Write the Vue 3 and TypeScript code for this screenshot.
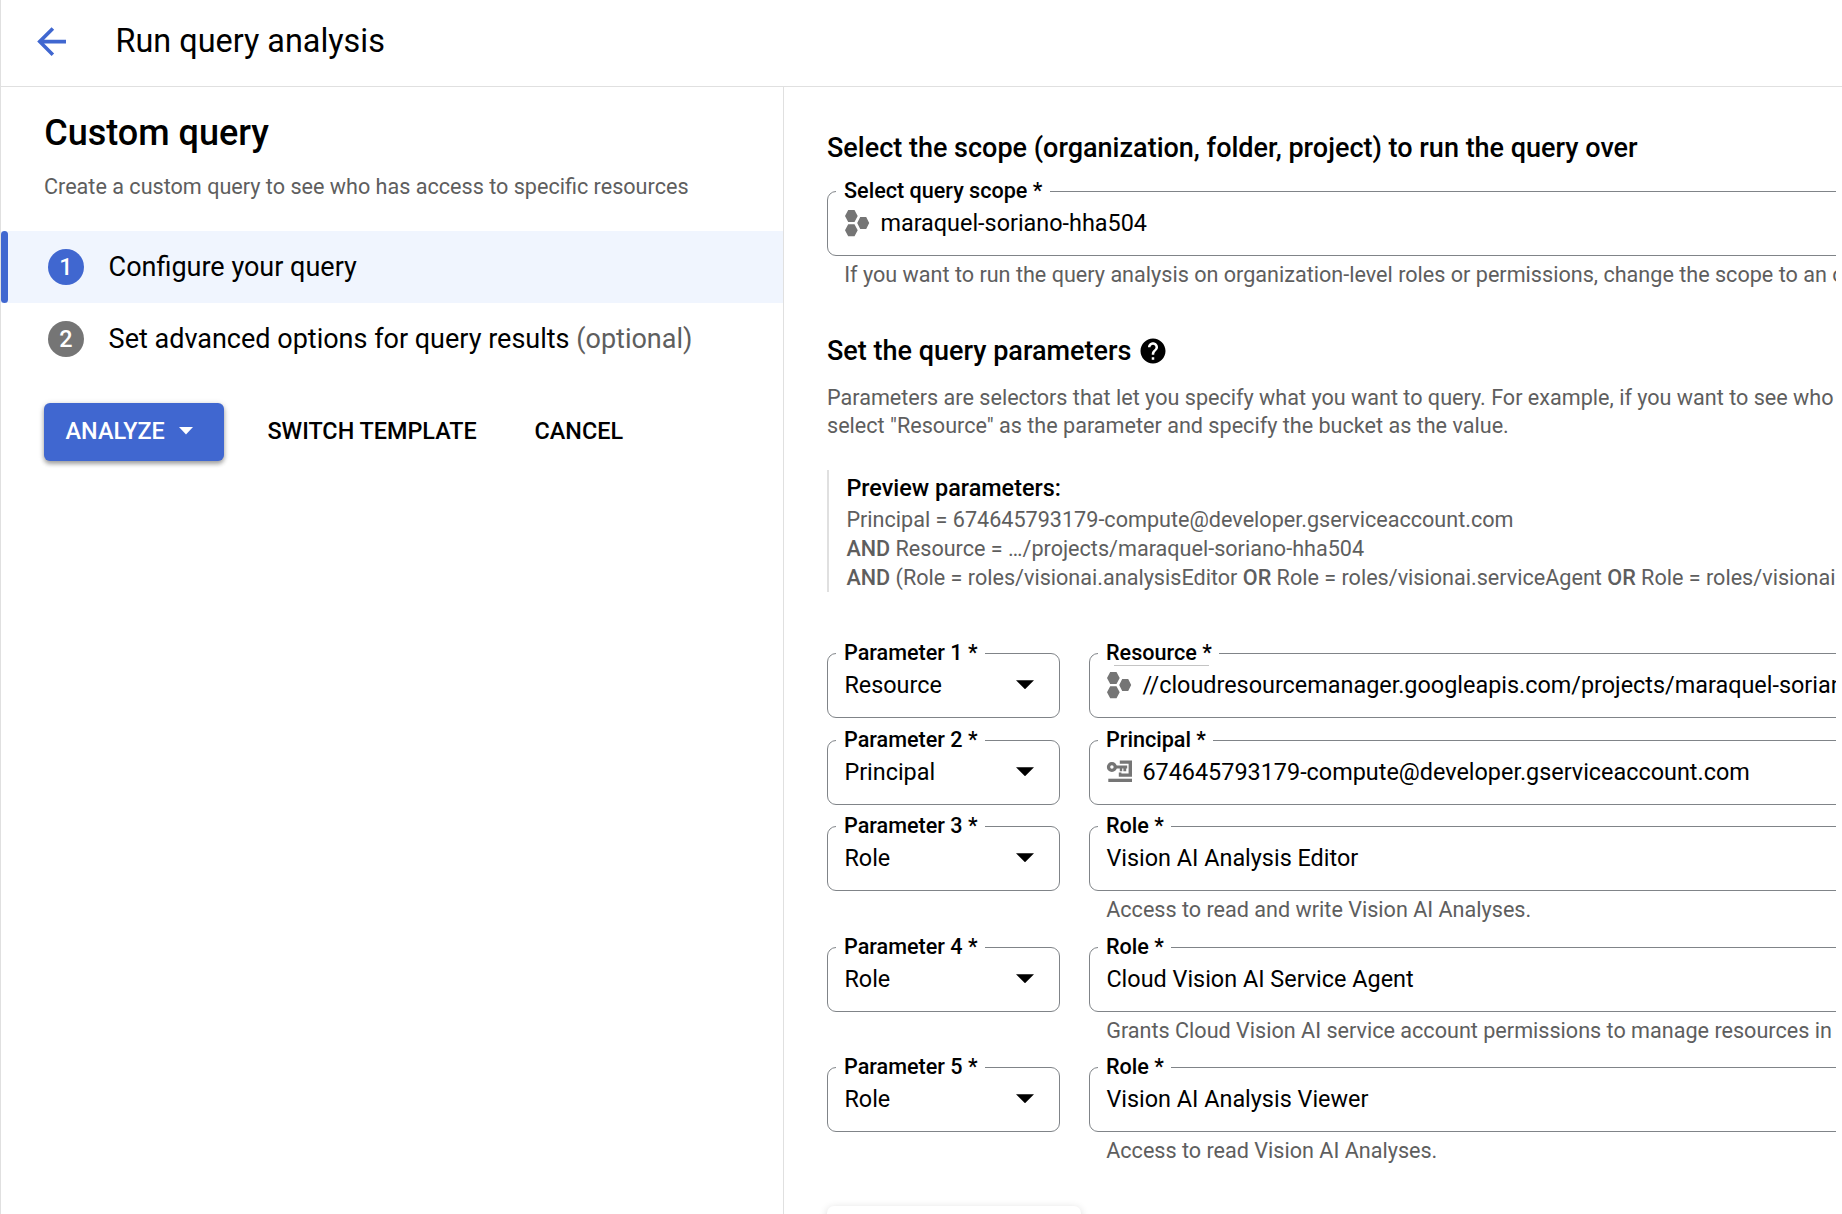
<script setup lang="ts">
type IconName = 'project' | 'account'

interface Param {
  type: string
  label: string
  value: string
  icon?: IconName
  hinted?: boolean
  helper?: string
}

const steps = [
  { title: 'Configure your query', optional: false, active: true },
  { title: 'Set advanced options for query results', optional: true, active: false },
]

const params: Param[] = [
  {
    type: 'Resource',
    label: 'Resource *',
    value: '//cloudresourcemanager.googleapis.com/projects/maraquel-soriano-hha504',
    icon: 'project',
    hinted: true,
  },
  {
    type: 'Principal',
    label: 'Principal *',
    value: '674645793179-compute@developer.gserviceaccount.com',
    icon: 'account',
  },
  {
    type: 'Role',
    label: 'Role *',
    value: 'Vision AI Analysis Editor',
    helper: 'Access to read and write Vision AI Analyses.',
  },
  {
    type: 'Role',
    label: 'Role *',
    value: 'Cloud Vision AI Service Agent',
    helper: 'Grants Cloud Vision AI service account permissions to manage resources in',
  },
  {
    type: 'Role',
    label: 'Role *',
    value: 'Vision AI Analysis Viewer',
    helper: 'Access to read Vision AI Analyses.',
  },
]
</script>

<template>
  <div class="page">
    <header class="header">
      <svg class="back" viewBox="0 0 24 24"><path d="M20 11H7.83l5.59-5.59L12 4l-8 8 8 8 1.41-1.41L7.83 13H20z" /></svg>
      <h1>Run query analysis</h1>
    </header>

    <div class="body">
      <aside class="side">
        <h2>Custom query</h2>
        <p class="lead">Create a custom query to see who has access to specific resources</p>
        <ol class="steps">
          <li v-for="(step, i) in steps" :key="step.title" class="step" :class="{ active: step.active }">
            <span class="num">{{ i + 1 }}</span>
            <span>{{ step.title }} <span v-if="step.optional" class="optional">(optional)</span></span>
          </li>
        </ol>
        <div class="actions">
          <button class="analyze">
            ANALYZE
            <svg class="caret" viewBox="0 0 14 8"><path d="M0 0h14L7 7.4z" /></svg>
          </button>
          <button class="switch">SWITCH TEMPLATE</button>
          <button class="cancel">CANCEL</button>
        </div>
      </aside>

      <main class="main">
        <h3>Select the scope (organization, folder, project) to run the query over</h3>
        <div class="field scope">
          <span class="label">Select query scope *</span>
          <svg class="icon" viewBox="0 0 29 29">
            <path d="M1 8l3.2-6h6.3l3.2 6-3.2 6H4.2zM1 22.3l3.2-6h6.3l3.2 6-3.2 6H4.2zM13.2 15l3-5.9h6l3 5.9-3 5.9h-6z" />
          </svg>
          <span class="value">maraquel-soriano-hha504</span>
        </div>
        <p class="helper">If you want to run the query analysis on organization-level roles or permissions, change the scope to an organization</p>

        <h3 class="params-title">
          Set the query parameters
          <svg class="help" viewBox="0 0 24 24">
            <path d="M12 2C6.48 2 2 6.48 2 12s4.48 10 10 10 10-4.48 10-10S17.52 2 12 2zm1 17h-2v-2h2v2zm2.07-7.75l-.9.92C13.45 12.9 13 13.5 13 15h-2v-.5c0-1.1.45-2.1 1.17-2.83l1.24-1.26c.37-.36.59-.86.59-1.41 0-1.1-.9-2-2-2s-2 .9-2 2H8c0-2.21 1.79-4 4-4s4 1.79 4 4c0 .88-.36 1.68-.93 2.25z" />
          </svg>
        </h3>
        <p class="intro">
          Parameters are selectors that let you specify what you want to query. For example, if you want to see who<br />
          select "Resource" as the parameter and specify the bucket as the value.
        </p>

        <section class="preview">
          <h4>Preview parameters:</h4>
          <p>Principal = 674645793179-compute@developer.gserviceaccount.com</p>
          <p><b>AND</b> Resource = …/projects/maraquel-soriano-hha504</p>
          <p>
            <b>AND</b> (Role = roles/visionai.analysisEditor <b>OR</b> Role = roles/visionai.serviceAgent <b>OR</b> Role =
            roles/visionai.analysisViewer)
          </p>
        </section>

        <div class="params">
          <div v-for="(p, i) in params" :key="i" class="row" :class="{ tall: p.helper }">
            <div class="field type">
              <span class="label">Parameter {{ i + 1 }} *</span>
              <span class="value">{{ p.type }}</span>
              <svg class="drop" viewBox="0 0 18 9"><path d="M0 0h18L9 9z" /></svg>
            </div>
            <div class="target">
              <div class="field">
                <span class="label" :class="{ hinted: p.hinted }">{{ p.label }}</span>
                <svg v-if="p.icon === 'project'" class="icon" viewBox="0 0 29 29">
                  <path d="M1 8l3.2-6h6.3l3.2 6-3.2 6H4.2zM1 22.3l3.2-6h6.3l3.2 6-3.2 6H4.2zM13.2 15l3-5.9h6l3 5.9-3 5.9h-6z" />
                </svg>
                <svg v-else-if="p.icon === 'account'" class="icon" viewBox="0 0 29 29">
                  <circle cx="5.9" cy="10" r="3.4" fill="none" stroke="#757575" stroke-width="3.3" />
                  <path d="M9.5 8.4h11.7v3.2h-1v2.6h-2.8v-2.6h-1.2v2.6h-2.4v-2.6H9.500z" />
                  <path d="M13.800 3.500H26v16.300H12.800v-4.300h2.600v1.100h7.200V6.700h-8.800z" />
                  <path d="M2.300 21.700H26V25H2.300z" />
                </svg>
                <span class="value">{{ p.value }}</span>
              </div>
              <p v-if="p.helper" class="helper">{{ p.helper }}</p>
            </div>
          </div>
        </div>

        <div class="card"></div>
      </main>
    </div>
  </div>
</template>

<style>
body {
  background: #fff;
  overflow: hidden;
}
</style>

<style scoped>
* {
  box-sizing: border-box;
}
h1,
h2,
h3,
h4,
p,
ol {
  margin: 0;
  padding: 0;
  white-space: nowrap;
}
.page {
  display: flex;
  flex-direction: column;
  width: 1842px;
  height: 1214px;
  overflow: hidden;
  border-left: 1px solid #e0e0e0;
  font-family: Roboto, sans-serif;
  color: #000;
}
.header {
  display: flex;
  align-items: center;
  flex: none;
  height: 87px;
  padding: 0 0 3px 29px;
  border-bottom: 1px solid #e0e0e0;
}
.back {
  width: 43.2px;
  height: 43.2px;
  fill: #4067d0;
}
h1 {
  margin-left: 42.3px;
  padding-bottom: 1px;
  font-size: 32.4px;
  font-weight: 400;
  line-height: 44px;
}
.body {
  display: flex;
  flex: 1;
  min-height: 0;
}
.side {
  width: 783px;
  flex: none;
  padding-top: 23px;
  border-right: 1px solid #e0e0e0;
}
h2 {
  padding-left: 43.2px;
  font-size: 36px;
  font-weight: 500;
  line-height: 46px;
}
.lead {
  margin: 17px 0 30px;
  padding-left: 43px;
  font-size: 21.6px;
  line-height: 28px;
  color: #5e5e5e;
}
.steps {
  list-style: none;
}
.step {
  display: flex;
  align-items: center;
  gap: 24.6px;
  height: 72px;
  padding-left: 47px;
  font-size: 27px;
}
.step.active {
  padding-left: 0;
  background: #f0f5fe;
}
.step.active::before {
  content: '';
  width: 7px;
  height: 72px;
  margin-right: 15.4px;
  border-radius: 4px;
  background: #4067d0;
}
.step.active .num {
  background: #4067d0;
}
.num {
  width: 36px;
  height: 36px;
  border-radius: 50%;
  background: #757575;
  color: #fff;
  font-size: 23.4px;
  font-weight: 500;
  line-height: 36px;
  text-align: center;
}
.optional {
  color: #5e5e5e;
}
.actions {
  display: flex;
  margin: 28px 0 0 43px;
}
button {
  display: flex;
  align-items: center;
  height: 58px;
  padding: 0 0 2px;
  border: 0;
  background: none;
  font: 500 23.4px Roboto, sans-serif;
  color: #000;
}
.analyze {
  width: 180px;
  padding-left: 21.6px;
  border-radius: 6px;
  background: #4067d0;
  color: #fff;
  box-shadow: 0 3px 4px rgba(0, 0, 0, 0.3), 0 1px 6px rgba(0, 0, 0, 0.16);
}
.caret {
  width: 14px;
  height: 8px;
  margin-left: 14.5px;
  fill: #fff;
}
.switch {
  margin-left: 43.4px;
}
.cancel {
  margin-left: 57.8px;
}
.main {
  width: 1052px;
  flex: none;
  padding: 45px 0 0 43px;
  overflow: hidden;
}
h3 {
  font-size: 27px;
  font-weight: 500;
  line-height: 32px;
}
.field {
  position: relative;
  display: flex;
  align-items: center;
  height: 65px;
  padding: 0 0 2px 16px;
  border: 1px solid #808488;
  border-radius: 9px;
}
.scope {
  width: 1200px;
  margin-top: 27px;
}
.label {
  position: absolute;
  top: -12px;
  left: 8px;
  padding: 0 7.5px 0 8px;
  background: #fff;
  font-size: 21.6px;
  font-weight: 500;
  line-height: 22px;
  white-space: nowrap;
}
.label.hinted::after {
  content: '';
  position: absolute;
  left: 16px;
  right: 10px;
  bottom: -2px;
  height: 1px;
  background: #c4c4c4;
}
.value {
  padding-left: 0.4px;
  font-size: 23.4px;
  line-height: 30px;
  white-space: nowrap;
}
.icon {
  flex: none;
  width: 29px;
  height: 29px;
  margin-right: 7px;
  fill: #757575;
}
.scope .icon {
  margin-bottom: 1px;
}
.helper {
  margin-top: 5px;
  padding-left: 17.2px;
  font-size: 21.6px;
  line-height: 28px;
  color: #5e5e5e;
}
.params-title {
  display: flex;
  align-items: center;
  margin-top: 46px;
}
.help {
  width: 30px;
  height: 30px;
  margin-left: 7px;
}
.intro {
  margin-top: 17px;
  font-size: 21.6px;
  line-height: 28px;
  color: #5e5e5e;
}
.preview {
  height: 122px;
  margin-top: 30px;
  padding: 3px 0 0 17.4px;
  border-left: 2px solid #e0e0e0;
  font-size: 21.6px;
  line-height: 29px;
  color: #5e5e5e;
}
h4 {
  margin-bottom: 2px;
  font-size: 23.4px;
  font-weight: 500;
  line-height: 30px;
  color: #000;
}
b {
  font-weight: 500;
}
.params {
  margin-top: 61px;
}
.row {
  display: flex;
  height: 86px;
}
.row:first-child {
  height: 87px;
}
.row.tall {
  height: 120px;
}
.row:nth-child(3) {
  height: 121px;
}
.type {
  width: 233px;
  margin-right: 29px;
  flex: none;
}
.drop {
  width: 18px;
  height: 9.5px;
  margin: 0 25px 0 auto;
}
.target {
  width: 1200px;
  flex: none;
}
.card {
  width: 254px;
  height: 65px;
  margin-top: 19px;
  border-radius: 7px;
  background: #fff;
  box-shadow: 0 2px 9px rgba(0, 0, 0, 0.16);
}
</style>
